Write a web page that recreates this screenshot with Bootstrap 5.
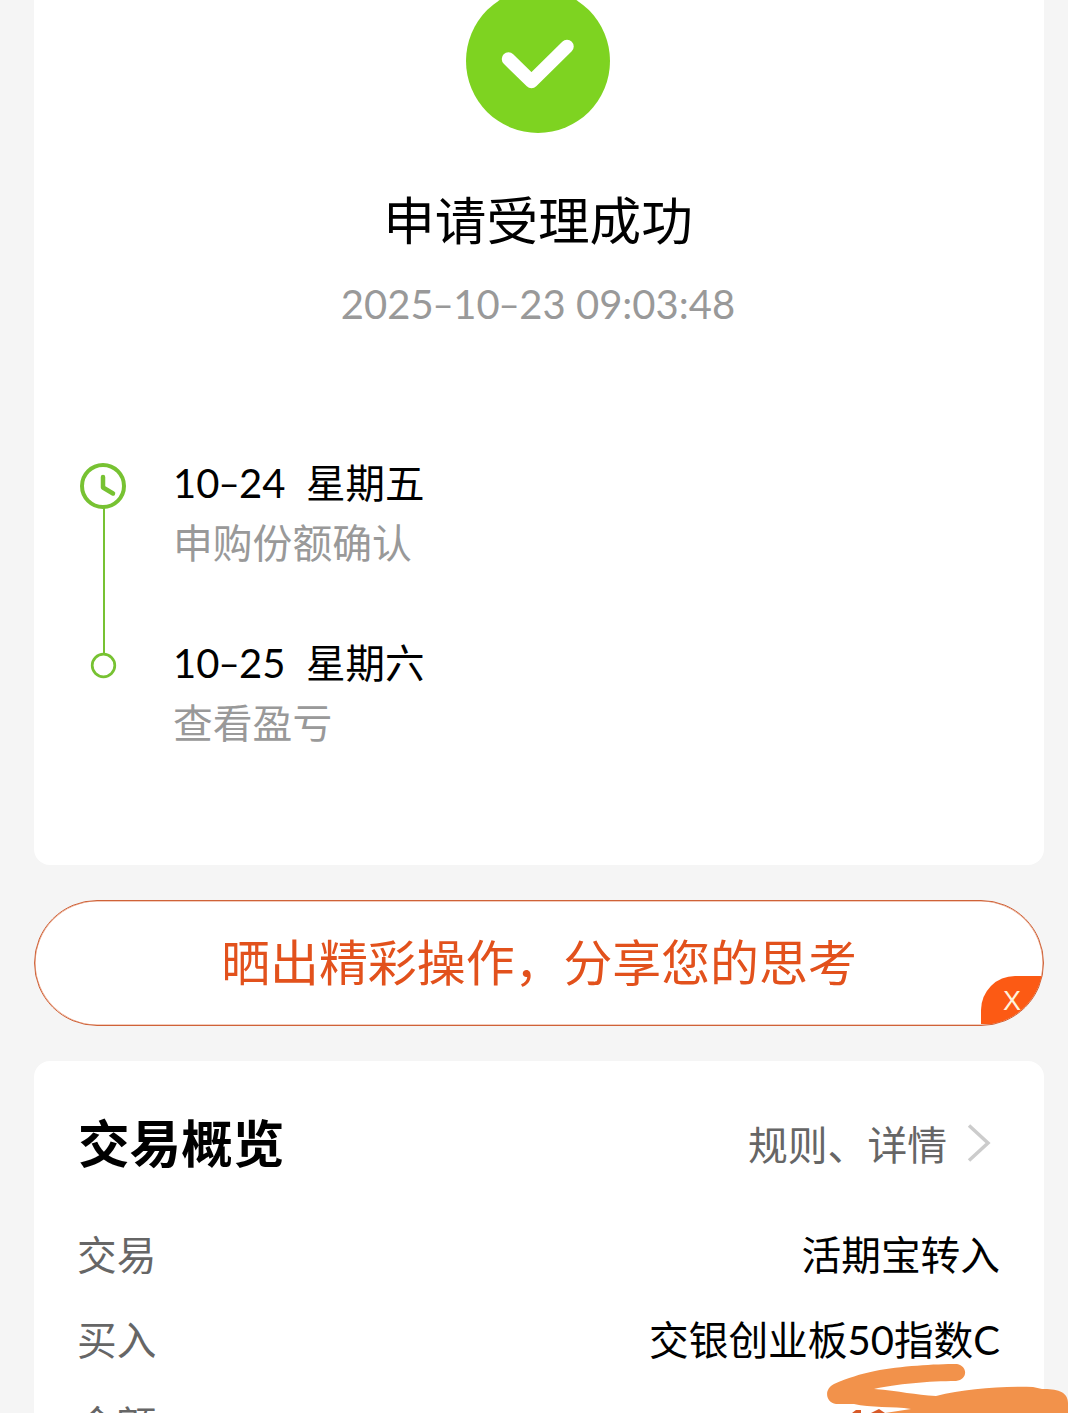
<!DOCTYPE html>
<html lang="zh-CN">
<head>
<meta charset="utf-8">
<meta name="viewport" content="width=device-width, initial-scale=1">
<title>申请受理成功</title>
<link href="https://cdn.jsdelivr.net/npm/bootstrap@5.3.0/dist/css/bootstrap.min.css" rel="stylesheet">
<style>
body{background:#f5f5f5;color:#000;font-family:"Noto Sans CJK SC",sans-serif;height:1413px;overflow:hidden}
.page{height:1413px;padding:0 24px 0 34px;gap:35px}
.panel{background:#fff;border-radius:16px}
.result{height:865px;border-radius:0 0 16px 16px}
.result-head{padding-right:2px}
.ok-icon{margin-top:-11px}
.result-title{font-size:51.6px;line-height:70px;margin:50px 0 0;font-weight:400}
.result-time{font-size:40px;line-height:60px;margin-top:19px;color:#999}
.num{font-family:Lato,"Noto Sans CJK SC",sans-serif;font-size:40px;line-height:1}
.dash{font-family:Inter,sans-serif;font-weight:300;line-height:1;display:inline-block;transform:scaleX(1.2);margin:0 1px 0 .5px}
.steps{margin-top:119px;padding-left:46px}
.step-rail{width:48px}
.step-body{margin-left:45px;gap:60px}
.step-date{font-size:39.5px;line-height:60px;white-space:pre}
.step-date .num{margin-right:3px}
.step-note{font-size:39.8px;line-height:60px;color:#999}
.share{height:126px;background:#fff;border:1px solid #cf6238;box-shadow:inset 0 0 0 .6px #e79a7a;border-radius:63px;color:#e2511c;font-size:48.9px;line-height:70px;padding-bottom:6px}
.share-close{right:0;bottom:1px;width:62px;height:48px;background:#fc5a14;border-radius:34px 0 0 0;color:#fff3dc;font-family:"Liberation Sans",sans-serif;font-size:27px;line-height:50px}
.summary{height:400px;padding:43px 44px 0}
.summary h2{font-size:51.6px;line-height:70px;margin:0;font-weight:700}
.rules{font-size:39.8px;line-height:70px;color:#666;gap:20px;margin-right:9px;padding-top:4px;margin-bottom:-1px}
.rows{margin-top:33px}
.line-item{font-size:39.7px;line-height:85px;height:85px}
.line-item dt{font-weight:400;color:#666;margin-left:-1px}
.line-item dd{margin:0}
.scribble{left:820px;top:1355px}
</style>
<script src="https://cdn.jsdelivr.net/npm/bootstrap@5.3.0/dist/js/bootstrap.bundle.min.js"></script>
</head>
<body>
<main class="page d-flex flex-column position-relative overflow-hidden">
  <section class="panel result flex-shrink-0">
    <div class="result-head d-flex flex-column align-items-center">
      <svg class="ok-icon" width="144" height="144" viewBox="0 0 144 144"><circle cx="72" cy="72" r="72" fill="#7ed321"/><path d="M42.500 70 65.500 92.500 101 57.500" fill="none" stroke="#fff" stroke-width="13.500" stroke-linecap="round" stroke-linejoin="round"/></svg>
      <h1 class="result-title">申请受理成功</h1>
      <div class="result-time"><span class="num">2025<span class="dash">-</span>10<span class="dash">-</span>23 09:03:48</span></div>
    </div>
    <div class="steps d-flex flex-row">
      <svg class="step-rail flex-shrink-0" width="48" height="230" viewBox="0 0 48 230"><g fill="none" stroke="#77c232"><path d="M24 57V203" stroke-width="2"/><circle cx="23" cy="35" r="21" stroke-width="4"/><path d="M23 26v10.500l10 6" stroke-width="4.500" stroke-linecap="round" stroke-linejoin="round"/><circle cx="23.500" cy="214.500" r="11.300" stroke-width="2.700"/></g></svg>
      <div class="step-body d-flex flex-column">
        <div>
          <div class="step-date"><span class="num">10<span class="dash">-</span>24</span>  星期五</div>
          <div class="step-note">申购份额确认</div>
        </div>
        <div>
          <div class="step-date"><span class="num">10<span class="dash">-</span>25</span>  星期六</div>
          <div class="step-note">查看盈亏</div>
        </div>
      </div>
    </div>
  </section>
  <section class="share position-relative overflow-hidden flex-shrink-0 d-flex align-items-center justify-content-center">
    <span>晒出精彩操作，分享您的思考</span>
    <span class="share-close position-absolute text-center">X</span>
  </section>
  <section class="panel summary flex-shrink-0">
    <div class="d-flex justify-content-between align-items-center">
      <h2>交易概览</h2>
      <div class="rules d-flex align-items-center"><span>规则、详情</span><svg width="24" height="38" viewBox="0 0 24 38"><path d="M2 1.500 21 19 2 36.500" fill="none" stroke="#ccc" stroke-width="3.500"/></svg></div>
    </div>
    <dl class="rows mb-0">
      <div class="line-item d-flex justify-content-between"><dt>交易</dt><dd>活期宝转入</dd></div>
      <div class="line-item d-flex justify-content-between"><dt>买入</dt><dd>交银创业板<span class="num">50</span>指数<span class="num">C</span></dd></div>
      <div class="line-item d-flex justify-content-between"><dt>金额</dt></div>
    </dl>
  </section>
  <svg class="scribble position-absolute" width="248" height="58" viewBox="0 0 248 58"><path d="M32 58 36 55 41 55 41 58ZM51 58 59 54 65 58Z" fill="#d85a28"/><path d="M55 16C80 11 115 9 137 9C148 11 148 25 136 26C110 26 75 29 54 34C80 36 95 40 116 41C145 34 178 31 213 32L222 34C236 34 248 36 248 48V58H65L91 54C73 51 50 53 34 49H16C5 47 4 34 14 29C28 23 40 19 55 16Z" fill="#f2924b"/></svg>
</main>
</body>
</html>
